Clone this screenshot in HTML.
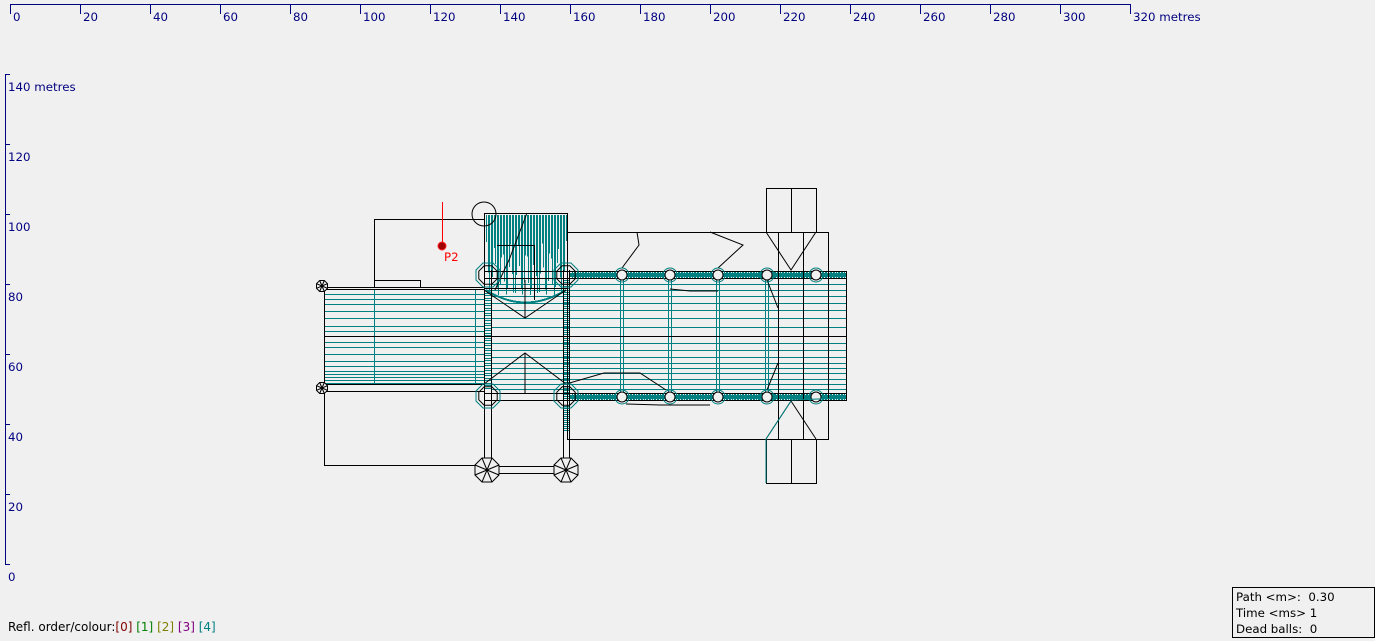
<!DOCTYPE html>
<html><head><meta charset="utf-8"><style>
html,body{margin:0;padding:0;background:#f0f0f0;width:1375px;height:641px;overflow:hidden}
svg{position:absolute;left:0;top:0}
text{font-family:"DejaVu Sans",sans-serif;font-size:11.8px}
.ax{fill:#000080}
#info{position:absolute;left:1232px;top:587px;border:1px solid #000;font:11.8px "DejaVu Sans",sans-serif;line-height:16px;padding-left:3px;box-sizing:border-box;width:143px;height:51px;padding-top:1px}
#leg{position:absolute;left:8px;top:620px;font:12px "DejaVu Sans",sans-serif}
</style></head><body>
<svg id="s" width="1375" height="641" xmlns="http://www.w3.org/2000/svg">
<g stroke="#000080" stroke-width="1" fill="none" shape-rendering="crispEdges">
<line x1="10" y1="4.5" x2="1130" y2="4.5"/>
<line x1="5.5" y1="74" x2="5.5" y2="565"/>
</g>
<g id="axt" stroke="#000080" shape-rendering="crispEdges"></g>
<g class="ax">
<text x="13" y="21">0</text><text x="83" y="21">20</text><text x="153" y="21">40</text><text x="223" y="21">60</text><text x="293" y="21">80</text><text x="363" y="21">100</text><text x="433" y="21">120</text><text x="503" y="21">140</text><text x="573" y="21">160</text><text x="643" y="21">180</text><text x="713" y="21">200</text><text x="783" y="21">220</text><text x="853" y="21">240</text><text x="923" y="21">260</text><text x="993" y="21">280</text><text x="1063" y="21">300</text><text x="1133" y="21">320 metres</text>
<text x="8" y="91">140 metres</text><text x="8" y="161">120</text><text x="8" y="231">100</text><text x="8" y="301">80</text><text x="8" y="371">60</text><text x="8" y="441">40</text><text x="8" y="511">20</text><text x="8" y="581">0</text>
</g>
<g id="teal" stroke="#008080" stroke-width="1" fill="none" shape-rendering="crispEdges"></g>
<g id="blk" stroke="#000" stroke-width="1" fill="none" shape-rendering="crispEdges">
<rect x="324.5" y="287.5" width="160" height="97"/>
<line x1="324" y1="289.5" x2="484" y2="289.5"/>
<line x1="324" y1="336.5" x2="846" y2="336.5"/>
<rect x="324.5" y="384.5" width="160" height="7"/>
<rect x="324.5" y="391.5" width="160" height="74"/>
<rect x="374.5" y="219.5" width="110" height="68"/>
<rect x="374.5" y="280.5" width="46" height="7"/>
<rect x="484.5" y="213.5" width="83" height="75"/>
<rect x="567.5" y="232.5" width="261" height="207"/>
<rect x="567.5" y="271.5" width="279" height="129"/>
<line x1="567" y1="278.5" x2="846" y2="278.5"/>
<line x1="567" y1="393.5" x2="846" y2="393.5"/>
<line x1="484.5" y1="270" x2="484.5" y2="466"/>
<line x1="491.5" y1="270" x2="491.5" y2="466"/>
<line x1="563.5" y1="270" x2="563.5" y2="466"/>
<line x1="569.5" y1="270" x2="569.5" y2="466"/>
<line x1="484" y1="271.5" x2="567" y2="271.5"/>
<line x1="484" y1="278.5" x2="567" y2="278.5"/>
<line x1="484" y1="393.5" x2="567" y2="393.5"/>
<line x1="484" y1="400.5" x2="567" y2="400.5"/>
<line x1="487" y1="466.5" x2="566" y2="466.5"/>
<line x1="487" y1="473.5" x2="566" y2="473.5"/>
<rect x="766.5" y="188.5" width="50" height="44"/>
<rect x="766.5" y="439.5" width="50" height="44"/>
<line x1="791.5" y1="188" x2="791.5" y2="232"/>
<line x1="791.5" y1="439" x2="791.5" y2="483"/>
<line x1="778.5" y1="232" x2="778.5" y2="439"/>
<line x1="803.5" y1="232" x2="803.5" y2="439"/>
<polyline points="497,245.5 534.5,245.5 534.5,300" />
</g>
<g stroke="#000" stroke-width="1" fill="none">
<circle cx="484" cy="214" r="12"/>
<polyline points="766,232 791,270 816,232"/>
<polyline points="766,439 791,401 816,439"/>
<polyline points="637,232 639,245 622,268"/>
<polyline points="710,232 743,245 718,268"/>
<polyline points="484,290 525,318 566,290"/>
<polyline points="484,384 525,353 566,384"/>
<polyline points="527,213 509,260 495,290"/>
<polyline points="525,353 525,393"/><polyline points="525,280 525,318"/>
<polyline points="566,384 604,373 640,373 666,390"/>
<polyline points="626,404 660,405 710,405"/>
<polyline points="767,280 778,308"/><polyline points="778,363 767,390"/>
<polyline points="670,289 690,291 718,291"/>
</g>
<g id="piers" stroke="#000" fill="#f0f0f0"></g>
<g stroke="#008080" fill="none">
<polyline points="766,483 766,439 791,401"/>
<line x1="791" y1="400" x2="846" y2="398"/>
</g>
<line x1="442.5" y1="202" x2="442.5" y2="243" stroke="#ff0000"/>
<circle cx="442" cy="246" r="4" fill="#a00000" stroke="#ff2020"/>
<text x="444" y="261" fill="#ff0000">P2</text>
</svg>
<div id="info">Path &lt;m&gt;:&nbsp; 0.30<br>Time &lt;ms&gt; 1<br>Dead balls:&nbsp; 0</div>
<div id="leg">Refl. order/colour:<span style="color:#800000">[0]</span> <span style="color:#008000">[1]</span> <span style="color:#808000">[2]</span> <span style="color:#800080">[3]</span> <span style="color:#008080">[4]</span></div>
<script>
var NS="http://www.w3.org/2000/svg";
function el(p,t,a){var e=document.createElementNS(NS,t);for(var k in a)e.setAttribute(k,a[k]);document.getElementById(p).appendChild(e);return e;}
for(var i=0;i<17;i++){var x=10.5+70*i;el("axt","line",{x1:x,y1:4,x2:x,y2:14});}
for(var i=0;i<8;i++){var y=74.5+70*i;el("axt","line",{x1:5,y1:y,x2:10,y2:y});}
var ys=[294,299,304,311,318,326,331,342,347,354,361,366,371,374,377,380,383];
ys.forEach(function(y){el("teal","line",{x1:324,y1:y+.5,x2:484,y2:y+.5});});
var ys2=[284,290,296,303,310,318,327,343,350,357,363,368,373,379,384,389];
ys2.forEach(function(y){el("teal","line",{x1:492,y1:y+.5,x2:846,y2:y+.5});});
[374,475].forEach(function(x){el("teal","line",{x1:x+.5,y1:289,x2:x+.5,y2:384});});
for(var x=486;x<567;x+=1.5){var h=240+Math.abs(Math.sin(x*1.7))*55;el("teal","line",{x1:Math.round(x)+.5,y1:215,x2:Math.round(x)+.5,y2:h});}
el("teal","path",{d:"M486,290 Q525,315 566,290","stroke-width":"2"});
for(var x=572;x<846;x+=1.6){var xx=Math.round(x)+.5;el("teal","line",{x1:xx,y1:271,x2:xx,y2:279});el("teal","line",{x1:xx,y1:393,x2:xx,y2:401});}
el("teal","rect",{x:570,y:273,width:276,height:4,fill:"#008080",stroke:"none"});
el("teal","rect",{x:570,y:395,width:276,height:4,fill:"#008080",stroke:"none"});
for(var y=280;y<432;y+=2){if(y<400||y>404){el("teal","line",{x1:563,y1:y+.5,x2:569,y2:y+.5});}}
for(var y=290;y<390;y+=2.5){el("teal","line",{x1:484,y1:Math.round(y)+.5,x2:491,y2:Math.round(y)+.5});}
[622,670,718,767].forEach(function(x){el("teal","line",{x1:x-1.5,y1:279,x2:x-1.5,y2:393});el("teal","line",{x1:x+1.5,y1:279,x2:x+1.5,y2:393});});
function oct(cx,cy,r,g,stroke){var p=[];for(var i=0;i<8;i++){var a=Math.PI/8+i*Math.PI/4;p.push((cx+r*Math.cos(a)).toFixed(1)+","+(cy+r*Math.sin(a)).toFixed(1));}var e=el(g,"polygon",{points:p.join(" ")});if(stroke)e.setAttribute("stroke",stroke);return p;}
[[622,275],[670,275],[718,275],[767,275],[816,275],[622,397],[670,397],[718,397],[767,397],[816,397]].forEach(function(c){
 var t=el("piers","circle",{cx:c[0],cy:c[1],r:7});t.setAttribute("stroke","#008080");t.setAttribute("fill","none");
 el("piers","circle",{cx:c[0],cy:c[1],r:5});});
[[488,275],[566,275],[488,396],[566,396]].forEach(function(c){
 oct(c[0],c[1],13,"piers","#008080");document.getElementById("piers").lastChild.setAttribute("fill","none");
 oct(c[0],c[1],10,"piers");document.getElementById("piers").lastChild.setAttribute("fill","none");});
[[487,470],[566,470],[322,286],[322,388]].forEach(function(c){
 var r=c[0]<400?6:13;var p=oct(c[0],c[1],r,"piers");
 p.forEach(function(q){var s=q.split(",");el("piers","line",{x1:c[0],y1:c[1],x2:s[0],y2:s[1]});});});
</script>
</body></html>
